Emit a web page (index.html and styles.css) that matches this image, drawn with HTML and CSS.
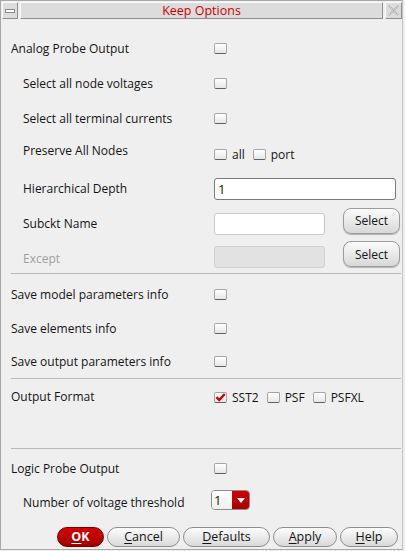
FILE: index.html
```html
<!DOCTYPE html>
<html>
<head>
<meta charset="utf-8">
<link rel="stylesheet" href="styles.css">
</head>
<body>
<div class="window">
  <div class="titlebar">
    <div class="tb-btn tb-min"><span class="min-bar"></span></div>
    <div class="tb-title">Keep Options</div>
    <div class="tb-btn tb-close">
      <svg width="11" height="11" viewBox="0 0 11 11">
        <path d="M1 1 L10 10 M10 1 L1 10" stroke="#a8a8a8" stroke-width="2" stroke-dasharray="1 1" fill="none"/>
      </svg>
    </div>
  </div>
  <div class="content">
    <div class="section s1">
      <div class="row h35"><span class="label">Analog Probe Output</span><span class="cb"></span></div>
      <div class="row h35"><span class="label indent">Select all node voltages</span><span class="cb"></span></div>
      <div class="row h35"><span class="label indent">Select all terminal currents</span><span class="cb"></span></div>
      <div class="row h35 preserve">
        <span class="label indent">Preserve All Nodes</span>
        <span class="checks">
          <span class="chk"><span class="cb"></span>all</span>
          <span class="chk"><span class="cb"></span>port</span>
        </span>
      </div>
      <div class="row h35"><span class="label indent">Hierarchical Depth</span><span class="field wide focus">1</span></div>
      <div class="row h35"><span class="label indent">Subckt Name</span><span class="field short"></span><span class="btn-select">Select</span></div>
      <div class="row h32 except"><span class="label indent disabled">Except</span><span class="field short dis"></span><span class="btn-select">Select</span></div>
    </div>
    <div class="sep"></div>
    <div class="section s2">
      <div class="row h34"><span class="label">Save model parameters info</span><span class="cb"></span></div>
      <div class="row h34"><span class="label">Save elements info</span><span class="cb"></span></div>
      <div class="row h33"><span class="label">Save output parameters info</span><span class="cb"></span></div>
    </div>
    <div class="sep"></div>
    <div class="section s3">
      <div class="row h18 fmt">
        <span class="label">Output Format</span>
        <span class="checks">
          <span class="chk"><span class="cb checked"><svg width="11" height="9" viewBox="0 0 11 9"><path d="M1.5 4.2 L4.2 7 L9.8 1" stroke="#d00000" stroke-width="2.4" fill="none"/></svg></span>SST2</span>
          <span class="chk"><span class="cb"></span>PSF</span>
          <span class="chk"><span class="cb"></span>PSFXL</span>
        </span>
      </div>
    </div>
    <div class="sep"></div>
    <div class="section s4">
      <div class="row h36"><span class="label">Logic Probe Output</span><span class="cb"></span></div>
      <div class="row h32"><span class="label indent narrow">Number of voltage threshold</span>
        <span class="combo"><span class="combo-val">1</span><span class="combo-arrow"><svg width="8" height="5" viewBox="0 0 8 5"><path d="M0 0 H8 L4 5 Z" fill="#fff"/></svg></span></span>
      </div>
      <div class="buttons">
        <span class="btn ok"><u>O</u>K</span>
        <span class="btn w-cancel"><u>C</u>ancel</span>
        <span class="btn w-defaults"><u>D</u>efaults</span>
        <span class="btn w-apply"><u>A</u>pply</span>
        <span class="btn w-help"><u>H</u>elp</span>
      </div>
    </div>
  </div>
</div>
</body>
</html>
```

FILE: styles.css
```css
* { box-sizing: border-box; }
html, body {
  margin: 0;
  padding: 0;
}
body {
  width: 405px;
  height: 551px;
  overflow: hidden;
  background: #efefef;
  font-family: "Open Sans", "Noto Sans", sans-serif;
  font-size: 12px;
  color: #141414;
}
.window {
  width: 403px;
  height: 550px;
  border: 1px solid #a8a8a8;
  border-right-color: #c4c4c4;
  background: #efefef;
  display: flex;
  flex-direction: column;
}
.titlebar {
  display: flex;
  gap: 2px;
  padding: 1px 0 0 1px;
  height: 18px;
  flex: none;
}
.tb-btn, .tb-title {
  height: 17px;
  background: #dcdcdc;
  border-top: 1px solid #fafafa;
  border-left: 1px solid #fafafa;
  border-bottom: 1px solid #8e8e8e;
  border-right: 1px solid #8e8e8e;
}
.tb-min {
  width: 16px;
  display: flex;
  align-items: center;
  justify-content: center;
}
.min-bar {
  width: 10px;
  height: 4px;
  border: 1px solid #8a8a8a;
  background: #fff;
}
.tb-title {
  flex: 1;
  text-align: center;
  color: #d40000;
  font-size: 12.5px;
  line-height: 15px;
}
.tb-close {
  width: 17px;
  display: flex;
  align-items: center;
  justify-content: center;
}
.content {
  flex: 1;
  display: flex;
  flex-direction: column;
  padding: 0 1px 0 10px;
}
.section { display: flex; flex-direction: column; }
.s1 { padding-top: 12px; }
.s2 { padding-top: 3px; }
.s3 { padding-top: 8px; height: 69px; }
.s4 { padding-top: 1px; flex: 1; }
.sep {
  height: 1px;
  background: #b9b9b9;
  flex: none;
}
.row {
  display: flex;
  align-items: center;
  flex: none;
}
.h35 { height: 35px; }
.h34 { height: 34px; }
.h33 { height: 33px; }
.h32 { height: 32px; }
.h36 { height: 36px; }
.h18 { height: 18px; }
.label {
  width: 203px;
  flex: none;
  white-space: nowrap;
}
.indent { padding-left: 12px; }
.narrow { width: 200px; }
.disabled { color: #a0a0a0; }
.except .label { margin-top: 2px; }
.cb {
  width: 13px;
  height: 11px;
  flex: none;
  border: 1px solid #a6a6a6;
  border-bottom-color: #606060;
  border-radius: 2px;
  background: linear-gradient(#ffffff, #e6e6e6);
  display: inline-flex;
  align-items: center;
  justify-content: center;
}
.checks {
  display: flex;
  align-items: center;
  gap: 8px;
}
.chk {
  display: inline-flex;
  align-items: center;
  gap: 5px;
}
.preserve { align-items: flex-start; }
.preserve .label { margin-top: 6px; }
.preserve .checks { margin-top: 10px; }
.fmt .checks { gap: 8px; margin-top: 3px; }
.field {
  height: 22px;
  background: #fff;
  border: 1px solid #c8c8c8;
  border-radius: 3px;
  padding: 0 3px;
  line-height: 20px;
  font-size: 13px;
  flex: none;
}
.field.focus { border-color: #7a7a7a; }
.wide { width: 182px; }
.short { width: 111px; }
.field.dis {
  background: #e2e2e2;
  border-color: #d0d0d0;
}
.btn-select {
  margin-left: 18px;
  width: 57px;
  height: 26px;
  margin-bottom: 6px;
  border: 1px solid #9c9c9c;
  border-radius: 8px;
  background: linear-gradient(#fbfbfb, #d8d8d8);
  box-shadow: 0 1px 1px rgba(0,0,0,0.25);
  display: flex;
  align-items: center;
  justify-content: center;
  flex: none;
}
.combo {
  display: flex;
  width: 39px;
  height: 20px;
  margin-top: -4px;
  border: 1px solid #8c8c8c;
  border-radius: 4px;
  overflow: hidden;
  flex: none;
}
.combo-val {
  flex: 1;
  background: linear-gradient(#ffffff, #eeeeee);
  padding-left: 2px;
  line-height: 18px;
  font-size: 13px;
}
.combo-arrow {
  width: 17px;
  background: linear-gradient(#d20000, #a80000);
  display: flex;
  align-items: center;
  justify-content: center;
}
.buttons {
  display: flex;
  justify-content: flex-end;
  gap: 3px;
  padding: 9px 3px 0 0;
}
.btn {
  height: 20px;
  border: 1px solid #8e8e8e;
  border-radius: 10px;
  background: linear-gradient(#fdfdfd, #d9d9d9);
  display: flex;
  align-items: center;
  justify-content: center;
  line-height: 16px;
  font-size: 12.5px;
  flex: none;
}
.btn u { text-decoration-thickness: 1px; text-underline-offset: 2px; }
.ok {
  width: 47px;
  background: linear-gradient(#d80000, #a20000);
  border-color: #7a0000;
  color: #fff;
  font-weight: bold;
}
.w-cancel { width: 73px; }
.w-defaults { width: 87px; }
.w-apply { width: 64px; }
.w-help { width: 58px; }
```
